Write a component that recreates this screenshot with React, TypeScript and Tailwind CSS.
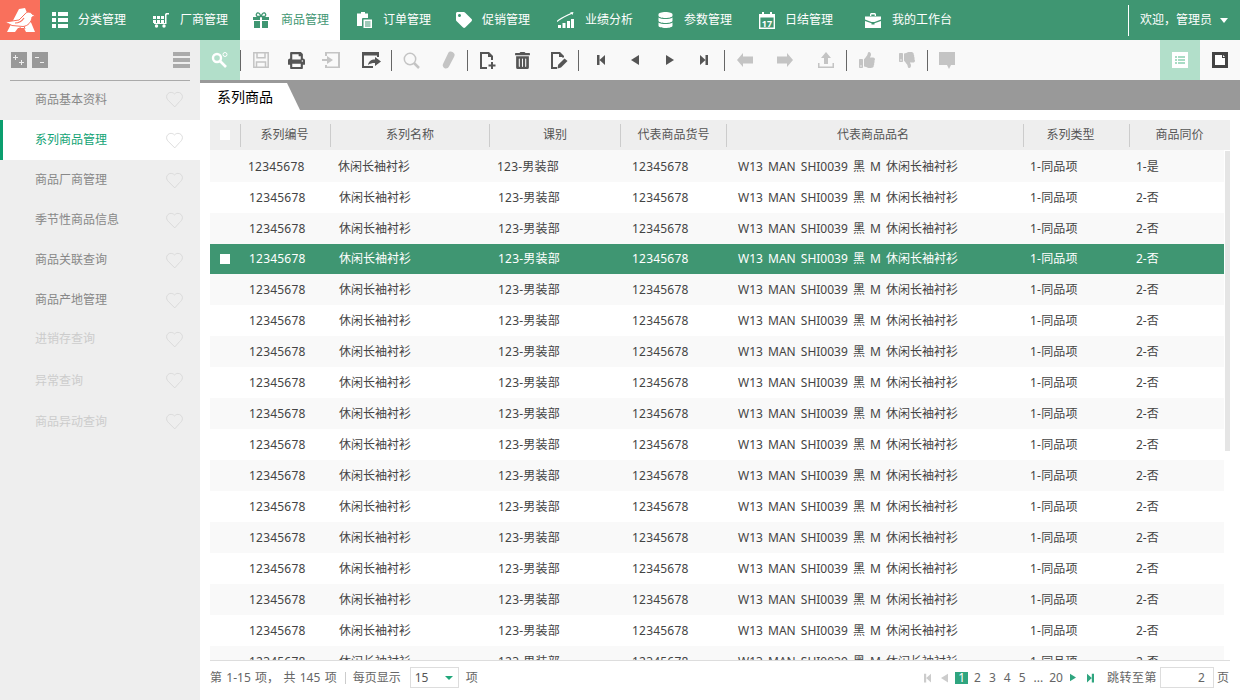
import React from "react";
import {FaDatabase, FaPrint, FaTag, FaThumbsDown, FaThumbsUp, FaTrashAlt} from "react-icons/fa";
import {LuHeart} from "react-icons/lu";

type IconProps = {className?: string};

const ListIcon = ({className}: IconProps) => (
    <svg viewBox="0 0 16 16" className={className} fill="currentColor">
        <path d="M0 0h4v4H0zM6 0h10v4H6zM0 6h4v4H0zM6 6h10v4H6zM0 12h4v4H0zM6 12h10v4H6z" />
    </svg>
);
const CartIcon = ({className}: IconProps) => (
    <svg viewBox="0 0 16 16" className={className} fill="currentColor">
        <path d="M0 4h3v3H0zM4 4h3v3H4zM0 8h3v3H0zM4 8h3v3H4zM8 4h3v3H8zM8 8h3v3H8z" />
        <path d="M12 7V2.500C12 1.500 13 1 14 1h2v1.500h-1.500c-.6 0-1 .3-1 1V12H1v-1h11z" />
        <circle cx="3.500" cy="14" r="1.700" />
        <circle cx="11" cy="14" r="1.700" />
    </svg>
);
const GiftIcon = ({className}: IconProps) => (
    <svg viewBox="0 0 16 16" className={className} fill="currentColor">
        <path d="M0 5h7v3H0zM9 5h7v3H9zM1 9h6v7H1zM9 9h6v7H9z" />
        <path d="M8 4.500 5 4.500C3.500 4.500 3 3 3.500 2S5 .5 6 1.200 8 4.500 8 4.500zm0 0 3 0c1.500 0 2-1.500 1.500-2.500S11 .5 10 1.200 8 4.500 8 4.500z" fill="none" stroke="currentColor" strokeWidth="1.300" />
    </svg>
);
const OrderIcon = ({className}: IconProps) => (
    <svg viewBox="0 0 16 16" className={className} fill="currentColor">
        <path d="M5 0h4v1.500h3V6h-5a1 1 0 0 0-1 1v7H1V1.500h4z" />
        <path d="M7.500 7.500H16V16H7.500z" />
        <path d="M9 9.500h5.500v1H9zM9 11.500h5.500v1H9zM9 13.500h5.500v1H9z" fill="#3f9672" />
    </svg>
);
const ChartIcon = ({className}: IconProps) => (
    <svg viewBox="0 0 17 16" className={className} fill="currentColor">
        <path d="M1 13h3v3H1zM5.500 11h3v5h-3zM10 9h3v7h-3zM14 7h3v9h-3z" />
        <path d="M0 9.500C4 6 8 4.500 15 1" fill="none" stroke="currentColor" strokeWidth="1.200" />
        <path d="M13 .5 16.500 0 15.500 3z" />
    </svg>
);
const CalendarIcon = ({className}: IconProps) => (
    <svg viewBox="0 0 16 17" className={className}>
        <path d="M.7 2.700h14.600v13.600H.7z" fill="none" stroke="currentColor" strokeWidth="1.400" />
        <path d="M0 2h16v3.500H0zM3 0h2v3H3zM11 0h2v3h-2z" fill="currentColor" />
        <text x="8" y="14.500" textAnchor="middle" fontSize="9" fontWeight="700" fill="currentColor">17</text>
    </svg>
);
const CaseIcon = ({className}: IconProps) => (
    <svg viewBox="0 0 16 15" className={className} fill="currentColor">
        <path d="M5 3V1.500C5 .7 5.700 0 6.500 0h3C10.300 0 11 .7 11 1.500V3H9.700V1.500H6.300V3z" />
        <path d="M0 3.500h16v3L9.500 9H6.500L0 6.500zM0 8l6.500 2.300v1.200h3v-1.200L16 8v7H0z" />
    </svg>
);

const KeyIcon = ({className}: IconProps) => (
    <svg viewBox="0 0 18 18" className={className} fill="none" stroke="currentColor">
        <circle cx="6" cy="7" r="4" strokeWidth="2.400" />
        <path d="M9 10l6 6" strokeWidth="2.600" />
        <circle cx="14" cy="3.500" r="2" strokeWidth="1" />
    </svg>
);
const SaveIcon = ({className}: IconProps) => (
    <svg viewBox="0 0 16 16" className={className} fill="none" stroke="currentColor" strokeWidth="1.500">
        <path d="M.8.800h14.400v14.400H.8zM4 .8v5h8v-5M3.500 15V10h9v5" />
    </svg>
);
const ImportIcon = ({className}: IconProps) => (
    <svg viewBox="0 0 18 16" className={className} fill="currentColor">
        <path d="M3 0h15v16H3v-3h2v1.500h11v-13H5V4H3z" />
        <path d="M0 7h5V4l6 4-6 4V9H0z" />
    </svg>
);
const OpenIcon = ({className}: IconProps) => (
    <svg viewBox="0 0 19 16" className={className} fill="currentColor">
        <path d="M0 0h17v5h-2V3.500H2v10.500h9v2H0z" />
        <path d="M6 13c.5-3.500 3-5.500 7-5.500V5l6 4.500L13 14v-3c-3 0-5 .5-7 2z" />
    </svg>
);
const SearchIcon = ({className}: IconProps) => (
    <svg viewBox="0 0 17 17" className={className} fill="none" stroke="currentColor">
        <circle cx="7" cy="7" r="5.700" strokeWidth="1.500" />
        <path d="M11 11l5 5" strokeWidth="2.500" />
    </svg>
);
const EraserIcon = ({className}: IconProps) => (
    <svg viewBox="0 0 13 18" className={className} fill="currentColor">
        <path d="M8 .5c1.500-.5 4 1 4.500 2.500.3 1 0 2-.5 3L7 15.500c-.8 1.700-2.700 2.500-4.300 1.700S.2 14.500 1 13L6 2.500C6.400 1.500 7 .8 8 .5z" />
    </svg>
);
const NewDocIcon = ({className}: IconProps) => (
    <svg viewBox="0 0 17 17" className={className} fill="currentColor">
        <path d="M1 0h9l4 4v4h-2V5H9V2H3v13h5v2H1z" />
        <path d="M12 10h2v2.500h2.500v2H14V17h-2v-2.500H9.500v-2H12z" />
    </svg>
);
const EditDocIcon = ({className}: IconProps) => (
    <svg viewBox="0 0 18 17" className={className} fill="currentColor">
        <path d="M1 0h9l4 4v1.500h-2V5H9V2H3v13h4v2H1z" />
        <path d="M14.500 6.500 17.500 9l-6.500 6.500-3.500 1 .7-3.700z" />
    </svg>
);
const FirstIcon = ({className}: IconProps) => (
    <svg viewBox="0 0 8 10" className={className} fill="currentColor"><path d="M0 0h2.500v10H0zM8 0v10L2.500 5z" /></svg>
);
const PrevIcon = ({className}: IconProps) => (
    <svg viewBox="0 0 8 10" className={className} fill="currentColor"><path d="M8 0v10L0 5z" /></svg>
);
const NextIcon = ({className}: IconProps) => (
    <svg viewBox="0 0 8 10" className={className} fill="currentColor"><path d="M0 0v10l8-5z" /></svg>
);
const LastIcon = ({className}: IconProps) => (
    <svg viewBox="0 0 8 10" className={className} fill="currentColor"><path d="M8 0H5.500v10H8zM0 0v10l5.500-5z" /></svg>
);
const LeftIcon = ({className}: IconProps) => (
    <svg viewBox="0 0 16 14" className={className} fill="currentColor"><path d="M0 7l6-7v3.500h10v7H6V14z" /></svg>
);
const RightIcon = ({className}: IconProps) => (
    <svg viewBox="0 0 16 14" className={className} fill="currentColor"><path d="M16 7l-6-7v3.500H0v7h10V14z" /></svg>
);
const UploadIcon = ({className}: IconProps) => (
    <svg viewBox="0 0 16 16" className={className} fill="currentColor">
        <path d="M8 0l5 6h-3v6H6V6H3zM0 11h1.500v3.500h13V11H16v5H0z" />
    </svg>
);
const CommentIcon = ({className}: IconProps) => (
    <svg viewBox="0 0 16 17" className={className} fill="currentColor"><path d="M0 0h16v13h-4l-2 4-2-4H0z" /></svg>
);
const ListDocIcon = ({className}: IconProps) => (
    <svg viewBox="0 0 16 16" className={className}>
        <path d="M0 0h16v16H0z" fill="#fff" />
        <path d="M3 4h2v2H3zM6 4h7v2H6zM3 7h2v2H3zM6 7h7v2H6zM3 10h2v2H3zM6 10h7v2H6z" fill="#a8dcc4" />
    </svg>
);
const NoteIcon = ({className}: IconProps) => (
    <svg viewBox="0 0 16 16" className={className}>
        <path d="M0 0h16v16H0z" fill="#444" />
        <path d="M3 3h7v3h3v7H3z" fill="#fff" />
        <path d="M11 3l2 2h-2z" fill="#fff" />
    </svg>
);
const ExpandIcon = ({className}: IconProps) => (
    <svg viewBox="0 0 16 16" className={className}>
        <path d="M0 0h16v16H0z" fill="#999" />
        <path d="M4 3h1v2h2v1H5v2H4V6H2V5h2zM10 8h1v2h2v1h-2v2h-1v-2H8v-1h2z" fill="#eee" />
    </svg>
);
const CollapseIcon = ({className}: IconProps) => (
    <svg viewBox="0 0 16 16" className={className}>
        <path d="M0 0h16v16H0z" fill="#999" />
        <path d="M3 5h4v1H3zM8 10h4v1H8z" fill="#eee" />
    </svg>
);

const navItems = [
    {label: "分类管理", icon: ListIcon, cls: "w-[100px] pl-3 gap-[10px]", icn: "h-4 w-4"},
    {label: "厂商管理", icon: CartIcon, cls: "w-[100px] pl-[13px] gap-[11px]", icn: "h-4 w-4"},
    {label: "商品管理", icon: GiftIcon, cls: "w-[100px] pl-[13px] gap-3 bg-white text-[#3f9672]", icn: "h-4 w-4"},
    {label: "订单管理", icon: OrderIcon, cls: "w-[103px] pl-4 gap-[11px]", icn: "h-4 w-4"},
    {label: "促销管理", icon: FaTag, cls: "w-[100px] pl-[13px] gap-[10px]", icn: "h-4 w-4"},
    {label: "业绩分析", icon: ChartIcon, cls: "w-[101px] pl-[14px] gap-[11px]", icn: "h-4 w-[17px]"},
    {label: "参数管理", icon: FaDatabase, cls: "w-[101px] pl-[14px] gap-[11px]", icn: "h-4 w-[15px]"},
    {label: "日结管理", icon: CalendarIcon, cls: "w-[105px] pl-[14px] gap-[10px]", icn: "h-[17px] w-4"},
    {label: "我的工作台", icon: CaseIcon, cls: "w-[124px] pl-[15px] gap-[11px]", icn: "h-[15px] w-4"},
];

const sideItems = [
    {label: "商品基本资料", cls: "h-[39px] pb-[2px]"},
    {label: "系列商品管理", cls: "h-10", active: true},
    {label: "商品厂商管理", cls: "h-10"},
    {label: "季节性商品信息", cls: "h-10"},
    {label: "商品关联查询", cls: "h-10"},
    {label: "商品产地管理", cls: "h-10"},
    {label: "进销存查询", cls: "h-10 pb-[2px]", disabled: true},
    {label: "异常查询", cls: "h-[41px]", disabled: true},
    {label: "商品异动查询", cls: "h-[41px]", disabled: true},
];

const G = "text-[#c4c4c4]";
const D = "text-[#555555]";

const tools = [
    {icon: SaveIcon, cls: `w-10 ${G}`, icn: "h-4 w-4"},
    {icon: FaPrint, cls: `w-[30px] ${D}`, icn: "h-[17px] w-[17px]"},
    {icon: ImportIcon, cls: `w-10 ${G}`, icn: "h-4 w-[18px]"},
    {icon: OpenIcon, cls: `w-10 ${D}`, icn: "h-4 w-[19px]"},
    {sep: true},
    {icon: SearchIcon, cls: `w-[38px] ${G}`, icn: "h-[17px] w-[17px]"},
    {icon: EraserIcon, cls: `w-[37px] ${G}`, icn: "h-[18px] w-[13px]"},
    {sep: true},
    {icon: NewDocIcon, cls: `w-[38px] ${D}`, icn: "h-[17px] w-[17px]"},
    {icon: FaTrashAlt, cls: `w-[33px] ${D}`, icn: "h-[17px] w-[15px]"},
    {icon: EditDocIcon, cls: `w-[39px] ${D}`, icn: "h-[17px] w-[18px]"},
    {sep: true},
    {cls: "w-1"},
    {icon: FirstIcon, cls: `w-[35px] ${D}`, icn: "h-[10px] w-2"},
    {icon: PrevIcon, cls: `w-[34px] ${D}`, icn: "h-[10px] w-2"},
    {icon: NextIcon, cls: `w-[35px] ${D}`, icn: "h-[10px] w-2"},
    {icon: LastIcon, cls: `w-[34px] ${D}`, icn: "h-[10px] w-2"},
    {cls: "w-[3px]"},
    {sep: true},
    {icon: LeftIcon, cls: `w-10 ${G}`, icn: "h-[14px] w-4"},
    {icon: RightIcon, cls: `w-10 ${G}`, icn: "h-[14px] w-4"},
    {icon: UploadIcon, cls: `w-[41px] ${G}`, icn: "h-4 w-4"},
    {sep: true},
    {icon: FaThumbsUp, cls: `w-10 ${G}`, icn: "h-4 w-4"},
    {icon: FaThumbsDown, cls: `w-10 ${G}`, icn: "h-4 w-4"},
    {sep: true},
    {icon: CommentIcon, cls: `w-[37px] ${G}`, icn: "h-[17px] w-4"},
];

const columns = [
    {label: "系列编号", cls: "w-[90px] pr-[2px]"},
    {label: "系列名称", cls: "w-[159px]"},
    {label: "课别", cls: "w-[131px]"},
    {label: "代表商品货号", cls: "w-[106px]"},
    {label: "代表商品品名", cls: "w-[297px] pr-1"},
    {label: "系列类型", cls: "w-[106px] pr-[12px]"},
    {label: "商品同价", cls: "w-[100px]"},
];

const rows = Array.from({length: 17}, (_, i) => i);

function Separator() {
    return <div className="h-[21px] w-px shrink-0 bg-[#666666]" />;
}

function Logo() {
    return (
        <svg viewBox="0 0 40 40" className="h-10 w-10">
            {/* A behind the bird */}
            <path d="M7 32 L19 9 L25 8 L35 32 L26 32 L24 28 L18 28 L15 32 Z" fill="#fff" />
            <path d="M5 22 L19 20 L25 14 C27 11 31 12 32 14 L35.500 16 L32 17 C31.500 22 28 26 23 26.500 L12 25.500 Z" fill="#fff" stroke="#f9705c" strokeWidth="1" />
            <path d="M15 23 C19 23 22 21 24 18" fill="none" stroke="#f9705c" strokeWidth="1.200" />
            <path d="M20 27 L21 31 M24 26 L25 29" stroke="#f9705c" strokeWidth="1" />
        </svg>
    );
}

export default function App() {
    return (
        <div className="flex h-[700px] w-[1240px] flex-col overflow-hidden bg-white font-['Noto_Sans','Noto_Sans_CJK_SC',sans-serif] text-xs">
            <header className="flex h-10 shrink-0 items-center bg-[#3f9672] text-white">
                <div className="h-10 w-10 shrink-0 bg-[#f9705c]"><Logo /></div>
                {navItems.map((item) => (
                    <div key={item.label} className={`flex h-10 shrink-0 items-center ${item.cls}`}>
                        <item.icon className={`shrink-0 ${item.icn}`} />
                        <span>{item.label}</span>
                    </div>
                ))}
                <div className="ml-auto flex h-[31px] w-[112px] items-center justify-end border-l border-white pr-3">
                    <span>欢迎，管理员</span>
                    <span className="ml-2 h-0 w-0 border-x-4 border-t-[5px] border-x-transparent border-t-white" />
                </div>
            </header>

            <div className="flex min-h-0 flex-1">
                <aside className="w-[200px] shrink-0 bg-[#eeeeee]">
                    <div className="mx-[10px] flex h-[41px] items-center justify-between border-b border-[#aaaaaa]">
                        <div className="flex gap-[5px] pl-px">
                            <ExpandIcon className="h-4 w-4" />
                            <CollapseIcon className="h-4 w-4" />
                        </div>
                        <div className="flex flex-col gap-[2px]">
                            <div className="h-1 w-[17px] bg-[#aaaaaa]" />
                            <div className="h-1 w-[17px] bg-[#aaaaaa]" />
                            <div className="h-1 w-[17px] bg-[#aaaaaa]" />
                        </div>
                    </div>
                    {sideItems.map((item) => (
                        <div key={item.label} className={`flex items-center justify-between pr-4 ${item.cls} ${item.active ? "border-l-[3px] border-[#0a9e6e] bg-white pl-8 text-[#12a374]" : item.disabled ? "pl-[35px] text-[#cccccc]" : "pl-[35px] text-[#888888]"}`}>
                            <span>{item.label}</span>
                            <LuHeart size={19} strokeWidth={1} className="text-[#d5d5d5]" />
                        </div>
                    ))}
                </aside>

                <main className="flex min-w-0 flex-1 flex-col">
                    <div className="flex h-10 shrink-0 items-center bg-[#f9f9f9]">
                        <div className="flex h-10 w-10 items-center justify-center bg-[#b2dfca] text-white"><KeyIcon className="h-[18px] w-[18px]" /></div>
                        <Separator />
                        {tools.map((tool, i) => tool.sep ? (
                            <Separator key={i} />
                        ) : (
                            <div key={i} className={`flex h-10 shrink-0 items-center justify-center ${tool.cls}`}>
                                {tool.icon && <tool.icon className={tool.icn} />}
                            </div>
                        ))}
                        <div className="ml-auto flex h-10 w-10 items-center justify-center bg-[#b2dfca]"><ListDocIcon className="h-4 w-4" /></div>
                        <div className="flex h-10 w-10 items-center justify-center"><NoteIcon className="h-4 w-4" /></div>
                    </div>

                    <div className="flex h-[30px] shrink-0 items-end bg-[#999999]">
                        <div className="flex h-[27px] w-[100px] items-center bg-white pl-[17px] text-sm text-black [clip-path:polygon(0_0,87%_0,100%_100%,0_100%)]">系列商品</div>
                    </div>

                    <div className="flex min-h-0 flex-1 flex-col px-[10px] pt-[10px]">
                        <div className="flex h-[30px] shrink-0 items-center bg-[#eeeeee] text-[#555555]">
                            <div className="flex w-[30px] shrink-0 items-center justify-center">
                                <div className="h-[10px] w-[10px] bg-white" />
                            </div>
                            {columns.map((col) => (
                                <div key={col.label} className={`flex h-[23px] shrink-0 items-center justify-center border-l border-[#cccccc] ${col.cls}`}>{col.label}</div>
                            ))}
                        </div>

                        <div className="flex min-h-0 flex-1 overflow-hidden">
                            <div className="w-[1014px] shrink-0">
                                {rows.map((i) => {
                                    const selected = i === 3;
                                    return (
                                        <div key={i} className={`flex items-center ${i === 0 ? "h-8 pt-px" : selected ? "h-[30px]" : "h-[31px]"} ${selected ? "bg-[#3f9672] text-white" : i % 2 === 0 ? "bg-[#f9f9f9] text-[#444444]" : "text-[#444444]"}`}>
                                            <div className="flex w-[30px] shrink-0 justify-center">
                                                {selected && <div className="h-[10px] w-[10px] bg-white" />}
                                            </div>
                                            <div className={`w-[90px] shrink-0 pl-[9px] tracking-[0.2px] ${i === 0 ? "-translate-x-px" : ""}`}>12345678</div>
                                            <div className={`w-[160px] shrink-0 pl-[9px] ${i === 0 ? "-translate-x-px" : ""}`}>休闲长袖衬衫</div>
                                            <div className={`w-[131px] shrink-0 pl-2 tracking-[0.2px] ${i === 0 ? "-translate-x-px" : ""}`}>123-男装部</div>
                                            <div className="w-[106px] shrink-0 pl-[11px] tracking-[0.2px]">12345678</div>
                                            <div className="w-[297px] shrink-0 pl-[11px] [word-spacing:2px]">W13 MAN SHI0039 黑 M 休闲长袖衬衫</div>
                                            <div className="w-[106px] shrink-0 pl-[6px] tracking-[0.2px]">1-同品项</div>
                                            <div className="flex-1 pl-[6px]">{i === 0 ? "1-是" : "2-否"}</div>
                                        </div>
                                    );
                                })}
                            </div>
                            <div className="ml-px w-[5px] shrink-0 pt-px">
                                <div className="h-[300px] bg-[#e5e5e5]" />
                            </div>
                        </div>

                        <footer className="flex h-10 shrink-0 items-center justify-between border-t border-[#dddddd] pb-[6px] text-[#666666]">
                            <div className="flex items-center">
                                <span className="[word-spacing:1.200px]">第 1-15 项， 共 145 项</span>
                                <span className="ml-2 h-3 w-px bg-[#cccccc]" />
                                <span className="ml-[7px]">每页显示</span>
                                <div className="ml-[9px] flex h-[21px] w-[49px] items-center justify-between border border-[#dddddd] pl-1 pr-[5px] text-[#555555]">
                                    <span>15</span>
                                    <span className="h-0 w-0 border-x-[4px] border-t-[4px] border-x-transparent border-t-[#20a77a]" />
                                </div>
                                <span className="ml-[7px]">项</span>
                            </div>
                            <div className="flex items-center pr-px">
                                <FirstIcon className="h-[10px] w-[7px] text-[#cccccc]" />
                                <PrevIcon className="ml-[10px] h-[10px] w-[7px] text-[#cccccc]" />
                                <span className="ml-[7px] flex h-3 w-[13px] items-center justify-center bg-[#2fa57f] text-white">1</span>
                                <span className="ml-[6px]">2</span>
                                <span className="ml-2">3</span>
                                <span className="ml-2">4</span>
                                <span className="ml-2">5</span>
                                <span className="ml-2">...</span>
                                <span className="ml-[6px]">20</span>
                                <NextIcon className="ml-[7px] h-[11px] w-[6px] text-[#2fa57f]" />
                                <LastIcon className="ml-[11px] h-[10px] w-[7px] text-[#2fa57f]" />
                                <span className="ml-[13px] tracking-[0.5px]">跳转至第</span>
                                <div className="ml-[3px] flex h-[21px] w-[54px] items-center justify-end border border-[#dddddd] pr-2">2</div>
                                <span className="ml-[3px]">页</span>
                            </div>
                        </footer>
                    </div>
                </main>
            </div>
        </div>
    );
}
